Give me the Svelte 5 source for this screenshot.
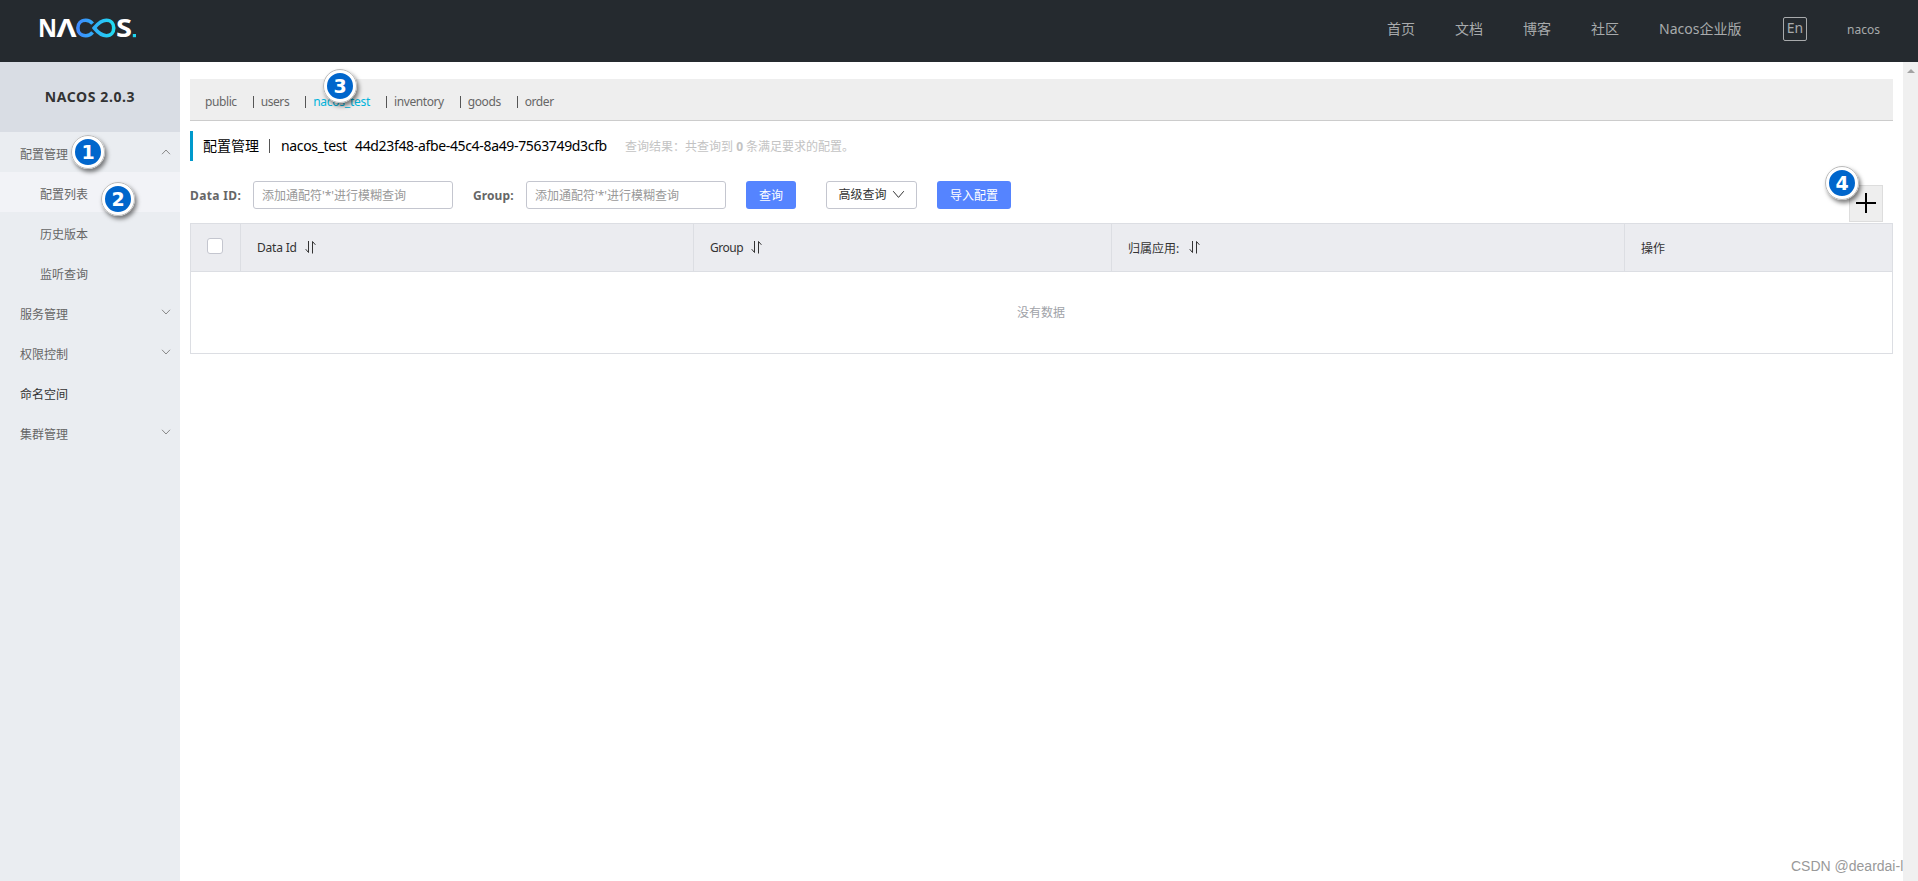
<script lang="ts">
	const nav = ['首页', '文档', '博客', '社区', 'Nacos企业版'];

	const menu = [
		{name: '配置管理', arrow: 'up'},
		{name: '配置列表', sub: true, active: true},
		{name: '历史版本', sub: true},
		{name: '监听查询', sub: true},
		{name: '服务管理', arrow: 'down'},
		{name: '权限控制', arrow: 'down'},
		{name: '命名空间', dark: true},
		{name: '集群管理', arrow: 'down'}
	];

	const namespaces = ['public', 'users', 'nacos_test', 'inventory', 'goods', 'order'];
	let current = $state('nacos_test');

	const columns = [
		{title: 'Data Id', sort: true},
		{title: 'Group', sort: true},
		{title: '归属应用:', sort: true},
		{title: '操作', sort: false}
	];
</script>

<div class="page">
	<header>
		<svg class="logo" width="100" height="24" viewBox="0 0 100 24">
			<defs>
				<linearGradient id="loop" gradientUnits="userSpaceOnUse" x1="36" y1="0" x2="76" y2="0">
					<stop offset="0" stop-color="#3f86ff" />
					<stop offset="1" stop-color="#1fe0f2" />
				</linearGradient>
			</defs>
			<text x="-2" y="21" textLength="19" lengthAdjust="spacingAndGlyphs">N</text>
			<text x="16.5" y="21" textLength="20" lengthAdjust="spacingAndGlyphs">Λ</text>
			<g fill="none" stroke="url(#loop)" stroke-width="3.6">
				<path d="M52.6 7.6C50.6 5.2 48.4 4.3 45.8 4.3C35.2 4.3 35.2 19.7 45.8 19.7C48.4 19.7 50.6 18.8 52.6 16.4" />
				<path d="M54.2 12C58 7.4 61.5 4.3 66.4 4.3C76.2 4.3 76.2 19.7 66.4 19.7C61.5 19.7 58 16.6 54.2 12Z" />
			</g>
			<text x="76" y="21" textLength="16" lengthAdjust="spacingAndGlyphs">S</text>
			<rect x="92.8" y="18" width="3.2" height="3.2" fill="#1fd5f0" />
		</svg>
		<nav>
			{#each nav as item}
				<a href="#/">{item}</a>
			{/each}
			<span class="lang">En</span>
			<span class="user">nacos</span>
		</nav>
	</header>

	<div class="body">
		<aside>
			<h1>NACOS 2.0.3</h1>
			<ul>
				{#each menu as item}
					<li class:sub={item.sub} class:active={item.active} class:dark={item.dark}>
						<span>{item.name}</span>
						{#if item.arrow}
							<svg class:up={item.arrow === 'up'} width="10" height="6" viewBox="0 0 10 6">
								<path d="M1 .8 5 5 9 .8" fill="none" stroke="#888" />
							</svg>
						{/if}
					</li>
				{/each}
			</ul>
		</aside>

		<main>
			<div class="namespaces">
				{#each namespaces as ns, i}
					{#if i > 0}<i class="bar"></i>{/if}
					<button class="ns" class:current={ns === current} onclick={() => (current = ns)}>{ns}</button>
				{/each}
			</div>

			<div class="heading">
				<span>配置管理</span>
				<i class="bar"></i>
				<span class="ns-name">{current}</span>
				<span class="ns-id">44d23f48-afbe-45c4-8a49-7563749d3cfb</span>
				<span class="result">查询结果：共查询到 <b>0</b> 条满足要求的配置。</span>
			</div>

			<div class="search">
				<label for="dataId">Data ID:</label>
				<input id="dataId" placeholder="添加通配符'*'进行模糊查询" />
				<label class="group-label" for="group">Group:</label>
				<input id="group" placeholder="添加通配符'*'进行模糊查询" />
				<button class="btn primary query">查询</button>
				<button class="btn advanced">
					高级查询
					<svg width="13" height="9" viewBox="0 0 13 9">
						<path d="M1.2 1.2 6.5 7.4 11.8 1.2" fill="none" stroke="#333" />
					</svg>
				</button>
				<button class="btn primary import">导入配置</button>
				<button class="add" aria-label="add">
					<svg width="20" height="20" viewBox="0 0 20 20">
						<path d="M10 0V20M0 10H20" stroke="#000" stroke-width="2" />
					</svg>
				</button>
			</div>

			<div class="table">
				<div class="row">
					<div class="check"><i></i></div>
					{#each columns as col}
						<div class="cell">
							<span>{col.title}</span>
							{#if col.sort}
								<svg width="11" height="14" viewBox="0 0 11 14">
									<path d="M3.5 1V12.5L.7 9.2M7.5 13.5V1.5L10.4 4.8" fill="none" stroke="#333" />
								</svg>
							{/if}
						</div>
					{/each}
				</div>
				<div class="empty">没有数据</div>
			</div>
			<div class="watermark">CSDN @deardai-l</div>
		</main>

		<div class="scrollbar"><i></i></div>
	</div>

	<span class="mark m1">1</span>
	<span class="mark m2">2</span>
	<span class="mark m3">3</span>
	<span class="mark m4">4</span>
</div>

<style>
	:global(body) {
		margin: 0;
		overflow: hidden;
	}
	.page {
		position: relative;
		width: 100%;
		height: 100vh;
		display: flex;
		flex-direction: column;
		font-family: 'Noto Sans', 'Noto Sans CJK SC', sans-serif;
		font-size: 12px;
		color: #333;
		background: #fff;
	}
	.page * {
		box-sizing: border-box;
	}
	button,
	input {
		font: inherit;
		margin: 0;
	}
	header {
		height: 62px;
		flex: none;
		display: flex;
		justify-content: space-between;
		background: #252a2f;
		padding: 0 38px 0 40px;
	}
	.logo {
		margin-top: 16px;
		overflow: visible;
	}
	.logo text {
		font-family: 'Open Sans', sans-serif;
		font-weight: 700;
		font-size: 25px;
		fill: #fff;
	}
	nav {
		display: flex;
		align-items: center;
		gap: 40px;
		font-size: 14px;
		color: #a8aaac;
	}
	nav a {
		color: inherit;
		text-decoration: none;
		line-height: 20px;
		margin-top: -4px;
		white-space: nowrap;
	}
	nav a:nth-child(5) {
		width: 84px;
	}
	.lang {
		width: 24px;
		height: 24px;
		margin-top: -4px;
		border: 1px solid #a8aaac;
		border-radius: 2px;
		line-height: 20px;
		text-align: center;
	}
	.user {
		font-size: 12px;
		width: 33px;
		margin-top: -4px;
	}
	.body {
		flex: 1;
		min-height: 0;
		display: flex;
	}
	aside {
		width: 180px;
		flex: none;
		background: #eaedf1;
	}
	h1 {
		margin: 0;
		height: 70px;
		line-height: 70px;
		text-align: center;
		font-size: 14px;
		font-weight: 700;
		letter-spacing: 0.6px;
		color: #333;
		background: #d9dde4;
	}
	ul {
		margin: 0;
		padding: 0;
		list-style: none;
	}
	li {
		height: 40px;
		display: flex;
		justify-content: space-between;
		align-items: center;
		padding: 0 9px 0 20px;
		color: #666;
	}
	li span {
		padding-top: 3px;
	}
	li.sub {
		padding-left: 40px;
	}
	li.active {
		background: #f2f3f7;
	}
	li.dark {
		color: #333;
	}
	.up {
		transform: rotate(180deg);
	}
	main {
		flex: 1;
		min-width: 0;
		display: flex;
		flex-direction: column;
		padding: 17px 10px 0;
	}
	.namespaces {
		height: 42px;
		flex: none;
		display: flex;
		align-items: center;
		padding: 3px 0 0 15px;
		background: #eee;
		border-bottom: 1px solid #ccc;
	}
	.bar {
		width: 1px;
		height: 12px;
		background: #555;
	}
	.ns {
		border: 0;
		background: none;
		padding: 0;
		color: #666;
		letter-spacing: -0.4px;
	}
	.namespaces .bar {
		margin: 1px 7px 0 15.9px;
	}
	.current {
		color: #00b4dc;
		letter-spacing: -0.25px;
	}
	.heading {
		height: 30px;
		flex: none;
		margin-top: 10px;
		display: flex;
		align-items: center;
		border-left: 3px solid #09c;
		padding: 0 0 2px 10px;
		font-size: 14px;
		color: #000;
		white-space: nowrap;
	}
	.heading .bar {
		height: 14px;
		margin: 2px 11px 0 10px;
	}
	.ns-name {
		width: 74px;
		letter-spacing: -0.35px;
	}
	.ns-id {
		width: 270px;
		letter-spacing: -0.34px;
	}
	.result {
		font-size: 12px;
		padding-top: 2px;
		color: #c3c3c3;
	}
	.search {
		height: 62px;
		flex: none;
		display: flex;
		align-items: flex-start;
		padding-top: 20px;
	}
	label {
		width: 63px;
		line-height: 29px;
		font-weight: 700;
		color: #666;
		letter-spacing: 0.35px;
	}
	.group-label {
		width: 53px;
		margin-left: 20px;
		letter-spacing: 0.1px;
	}
	input {
		width: 200px;
		height: 28px;
		border: 1px solid #c4c6cf;
		border-radius: 3px;
		padding: 1px 8px 0;
		outline: 0;
	}
	input::placeholder {
		color: #999;
	}
	.btn {
		height: 28px;
		border-radius: 3px;
		padding: 0;
		display: flex;
		align-items: center;
		justify-content: center;
	}
	.primary {
		border: 0;
		background: #5584ff;
		color: #fff;
	}
	.query {
		width: 50px;
		margin: 0 30px 0 20px;
	}
	.advanced {
		width: 91px;
		background: #fff;
		border: 1px solid #c4c6cf;
		color: #333;
		gap: 5px;
		padding-bottom: 2px;
	}
	.import {
		width: 74px;
		margin-left: 20px;
	}
	.add {
		width: 34px;
		height: 37px;
		margin: 4px 10px 0 auto;
		padding: 0 0 2px;
		display: flex;
		align-items: center;
		justify-content: center;
		background: #eee;
		border: 1px solid #ddd;
	}
	.table {
		height: 131px;
		flex: none;
		border: 1px solid #dcdee3;
	}
	.row {
		height: 48px;
		display: grid;
		grid-template-columns: 49px 453px 418px 513px 1fr;
		background: #ebecf0;
		border-bottom: 1px solid #dcdee3;
	}
	.check {
		display: flex;
		padding: 14px 0 0 16px;
	}
	.check i {
		width: 16px;
		height: 16px;
		background: #fff;
		border: 1px solid #c4c6cf;
		border-radius: 3px;
	}
	.cell {
		display: flex;
		align-items: center;
		gap: 9px;
		padding-left: 16px;
		border-left: 1px solid #dcdee3;
	}
	.cell:nth-child(2) span {
		width: 39px;
		letter-spacing: -0.2px;
		white-space: nowrap;
	}
	.cell:nth-child(3) span {
		width: 32px;
		letter-spacing: -0.5px;
	}
	.cell:nth-child(4) span {
		width: 52px;
	}
	.cell svg {
		margin-top: -2px;
	}
	.empty {
		height: 81px;
		line-height: 82px;
		text-align: center;
		padding-right: 1px;
		color: #a0a2a8;
	}
	.watermark {
		margin: auto -10px 6px auto;
		width: 112px;
		overflow: hidden;
		white-space: nowrap;
		font: 14px/18px 'Liberation Sans', sans-serif;
		color: #999;
	}
	.scrollbar {
		width: 15px;
		flex: none;
		background: #f0f0f0;
		display: flex;
		justify-content: center;
		padding: 7px 0 0 1px;
		align-items: flex-start;
	}
	.scrollbar i {
		border: 4px solid transparent;
		border-top: 0;
		border-bottom-color: #a3a3a3;
	}
	/* numbered step markers over the page */
	.mark {
		position: absolute;
		width: 34px;
		height: 34px;
		border: 4px solid #fff;
		border-radius: 50%;
		background: #06c;
		outline: 1px solid #bbb;
		outline-offset: -1px;
		box-shadow: 2px 3px 4px rgba(0, 0, 0, 0.5);
		color: #fff;
		font: bold 19px/26px 'DejaVu Sans', sans-serif;
		text-align: center;
	}
	.m1 {
		left: 71px;
		top: 135px;
	}
	.m2 {
		left: 101px;
		top: 182px;
	}
	.m3 {
		left: 323px;
		top: 69px;
	}
	.m4 {
		left: 1825px;
		top: 166px;
	}
</style>
